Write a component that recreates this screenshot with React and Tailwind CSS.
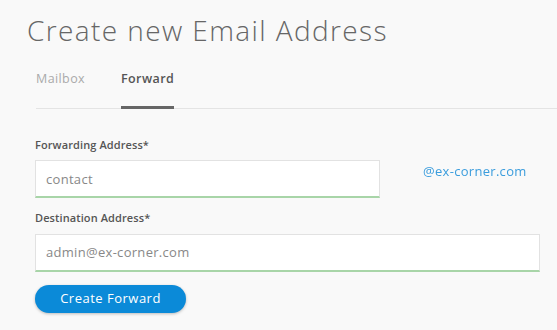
import React from 'react';

const Field = ({ label, children }) => (
    <div>
        <label className="block text-[11px] font-semibold text-[#555] mb-[7px] tracking-[0.1px]">{label}</label>
        {children}
    </div>
);

export default function App() {
    return (
        <div className="w-[557px] h-[330px] bg-[#f9f9f9] overflow-hidden font-['Open_Sans',sans-serif]">
            <h1 className="pl-[27px] pt-[12px] text-[28px] leading-[36px] font-light text-[#666] tracking-[1.4px]">
                Create new Email Address
            </h1>
            <div className="ml-[36px] mt-[21px] flex border-b border-[#e4e4e4]">
                <div className="pb-[19px] pt-[1px] text-[12.5px] text-[#aaa] tracking-[0.4px]">Mailbox</div>
                <div className="ml-[36px] pb-[17px] pt-[1px] text-[12.5px] font-semibold text-[#555] tracking-[0.4px] border-b-[3px] border-[#666] -mb-px">
                    Forward
                </div>
            </div>
            <div className="pl-[35px] pt-[28px] flex flex-col gap-[12px]">
                <Field label="Forwarding Address*">
                    <div className="flex items-start">
                        <input
                            type="text"
                            defaultValue="contact"
                            className="w-[345px] h-[38px] bg-white border border-[#e2e2e2] border-b-[2px] border-b-[#a8d5a8] px-[10px] text-[13px] text-[#888] tracking-[0.3px] outline-none"
                        />
                        <span className="ml-[43px] mt-[2px] text-[13px] text-[#3b9ddd] tracking-[0.3px] blur-[0.4px]">@ex-corner.com</span>
                    </div>
                </Field>
                <Field label="Destination Address*">
                    <input
                        type="text"
                        defaultValue="admin@ex-corner.com"
                        className="w-[505px] h-[38px] bg-white border border-[#e2e2e2] border-b-[2px] border-b-[#a8d5a8] px-[10px] text-[13px] text-[#888] tracking-[0.3px] outline-none"
                    />
                </Field>
                <div className="pt-px">
                    <button className="w-[151px] h-[28px] rounded-full bg-[#0b8ad8] text-white text-[13px] tracking-[0.5px] shadow-[0_1px_3px_rgba(0,0,0,0.25)]">
                        Create Forward
                    </button>
                </div>
            </div>
        </div>
    );
}
